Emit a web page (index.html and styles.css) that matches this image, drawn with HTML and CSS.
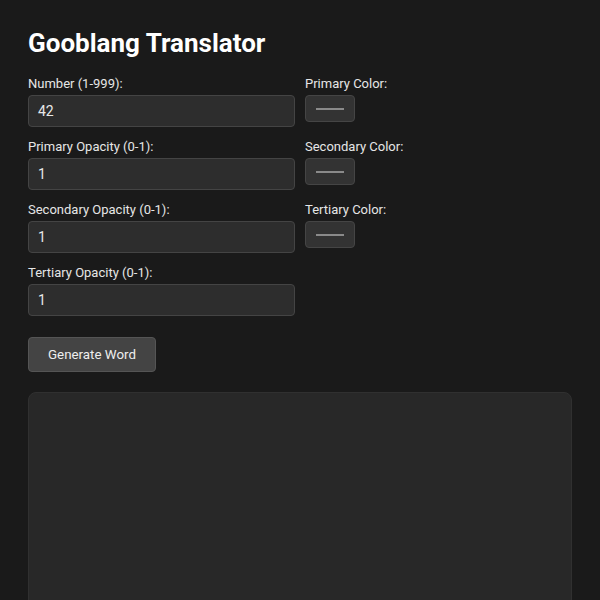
FILE: index.html
```html
<!DOCTYPE html>
<html lang="en">
<head>
<meta charset="utf-8">
<title>Gooblang Translator</title>
<link rel="stylesheet" href="styles.css">
</head>
<body>
<div class="container">
  <h1 class="title">Gooblang Translator</h1>
  <div class="form-grid">
    <div class="group">
      <label class="label">Number (1-999):</label>
      <div class="input">42</div>
    </div>
    <div class="group">
      <label class="label">Primary Color:</label>
      <div class="color"><span class="swatch"></span></div>
    </div>
    <div class="group">
      <label class="label">Primary Opacity (0-1):</label>
      <div class="input">1</div>
    </div>
    <div class="group">
      <label class="label">Secondary Color:</label>
      <div class="color"><span class="swatch"></span></div>
    </div>
    <div class="group">
      <label class="label">Secondary Opacity (0-1):</label>
      <div class="input">1</div>
    </div>
    <div class="group">
      <label class="label">Tertiary Color:</label>
      <div class="color"><span class="swatch"></span></div>
    </div>
    <div class="group">
      <label class="label">Tertiary Opacity (0-1):</label>
      <div class="input">1</div>
    </div>
  </div>
  <button class="btn">Generate Word</button>
  <div class="output"></div>
</div>
</body>
</html>
```
FILE: styles.css
```css
html, body {
  margin: 0;
  padding: 0;
  background: #1a1a1a;
}
body {
  font-family: Roboto, "Liberation Sans", sans-serif;
  color: #e8e8e8;
  overflow: hidden;
}
.container {
  padding: 28px;
}
.title {
  margin: 0 0 18px;
  font-size: 26px;
  line-height: 30px;
  font-weight: 700;
  color: #ffffff;
}
.form-grid {
  display: grid;
  grid-template-columns: 1fr 1fr;
  column-gap: 10px;
  row-gap: 12px;
}
.group {
  display: flex;
  flex-direction: column;
  align-items: flex-start;
}
.label {
  font-size: 13px;
  line-height: 15px;
  margin-bottom: 4px;
  color: #e6e6e6;
}
.input {
  box-sizing: border-box;
  width: 100%;
  height: 32px;
  padding: 0 9px;
  display: flex;
  align-items: center;
  background: #2d2d2d;
  border: 1px solid #444444;
  border-radius: 4px;
  font-size: 14px;
  color: #e8e8e8;
}
.color {
  box-sizing: border-box;
  width: 50px;
  height: 27px;
  display: flex;
  align-items: center;
  justify-content: center;
  background: #333333;
  border: 1px solid #454545;
  border-radius: 4px;
}
.swatch {
  display: block;
  width: 28px;
  height: 2px;
  background: #8a8a8a;
}
.btn {
  display: block;
  margin-top: 21px;
  box-sizing: border-box;
  height: 35px;
  width: 128px;
  padding: 0;
  background: #444444;
  border: 1px solid #555555;
  border-radius: 4px;
  font-family: Roboto, "Liberation Sans", sans-serif;
  font-size: 13.333px;
  color: #eeeeee;
}
.output {
  margin-top: 20px;
  height: 300px;
  background: #282828;
  border: 1px solid #303030;
  border-radius: 8px;
}
```
